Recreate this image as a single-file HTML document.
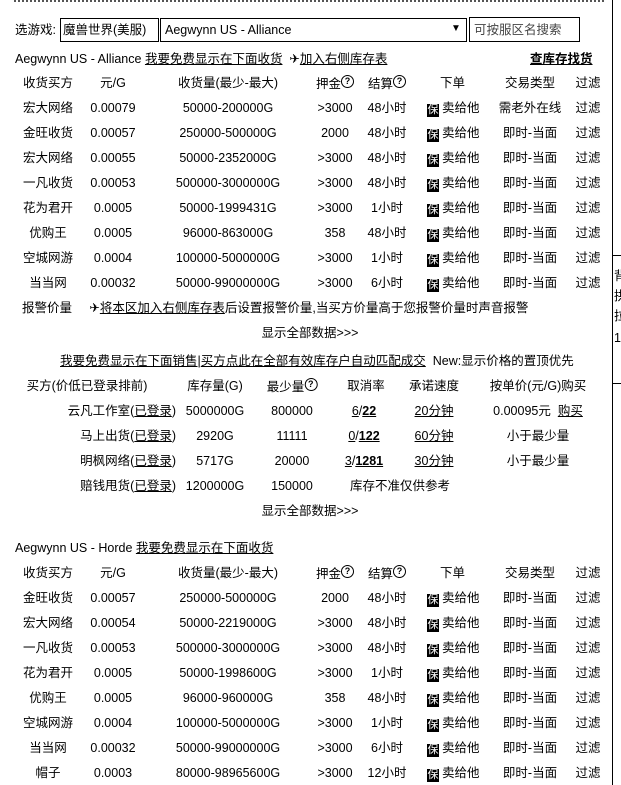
<!DOCTYPE html>
<html><head><meta charset="utf-8"><style>
body{margin:0;width:621px;height:785px;background:#fff;position:relative;overflow:hidden;font-family:"Liberation Sans","Noto Sans CJK SC",sans-serif;font-size:12.5px;color:#000}
.a{position:absolute;white-space:nowrap;line-height:16px}
.c{position:absolute;white-space:nowrap;line-height:16px;transform:translateX(-50%)}
u{text-decoration:underline}
.bao{display:inline-block;width:12px;height:13px;background:#000;color:#fff;font-size:11px;line-height:13px;text-align:center;vertical-align:-1px;margin-right:3px}
.q{display:inline-block;width:11px;height:11px;border:1px solid #000;border-radius:50%;font-size:9px;line-height:11px;text-align:center;vertical-align:4px;font-weight:bold}
.box{position:absolute;border:1px solid #000}
</style></head><body>
<div class="a" style="left:14px;top:0;width:590px;height:3px;border-top:2px dotted #555"></div>
<div style="position:absolute;left:612px;top:0;width:1px;height:785px;background:#000"></div>
<div class="box" style="left:612px;top:255px;width:12px;height:127px"></div>
<div class="a" style="left:614px;top:268px">背</div>
<div class="a" style="left:614px;top:288px">拱</div>
<div class="a" style="left:614px;top:308px">拉</div>
<div class="a" style="left:614px;top:330px">1</div>

<div class="a" style="left:15px;top:22px">选游戏:</div>
<div class="box" style="left:60px;top:18px;width:97px;height:22px"></div>
<div class="a" style="left:63px;top:22px">魔兽世界(美服)</div>
<div class="box" style="left:160px;top:18px;width:305px;height:22px"></div>
<div class="a" style="left:165px;top:22px">Aegwynn US - Alliance</div>
<div class="a" style="left:451px;top:21px;font-size:10px">▼</div>
<div class="box" style="left:469px;top:17px;width:109px;height:23px"></div>
<div class="a" style="left:474px;top:22px;color:#444">可按服区名搜索</div>

<div class="a" style="left:15px;top:51px">Aegwynn US - Alliance <u>我要免费显示在下面收货</u> &nbsp;✈<u>加入右侧库存表</u></div>
<div class="a" style="left:530px;top:51px"><u><b>查库存找货</b></u></div>

<div id="t1"></div>
<div class="a" style="left:22px;top:300px">报警价量 &nbsp;&nbsp;&nbsp;&nbsp;✈<u>将本区加入右侧库存表</u>后设置报警价量,当买方价量高于您报警价量时声音报警</div>
<div class="c" style="left:310px;top:325px">显示全部数据&gt;&gt;&gt;</div>
<div class="a" style="left:60px;top:353px"><u>我要免费显示在下面销售</u>|<u>买方点此在全部有效库存户自动匹配成交</u> &nbsp;New:显示价格的置顶优先</div>

<div class="c" style="left:87px;top:378px">买方(价低已登录排前)</div>
<div class="c" style="left:215px;top:378px">库存量(G)</div>
<div class="c" style="left:292px;top:378px">最少量<span class="q">?</span></div>
<div class="c" style="left:366px;top:378px">取消率</div>
<div class="c" style="left:434px;top:378px">承诺速度</div>
<div class="c" style="left:538px;top:378px">按单价(元/G)购买</div>

<div class="a" style="right:445px;top:403px">云凡工作室(<u>已登录</u>)</div>
<div class="c" style="left:215px;top:403px">5000000G</div><div class="c" style="left:292px;top:403px">800000</div>
<div class="c" style="left:364px;top:403px"><u>6</u>/<u><b>22</b></u></div><div class="c" style="left:434px;top:403px"><u>20分钟</u></div>
<div class="c" style="left:538px;top:403px">0.00095元 &nbsp;<u>购买</u></div>

<div class="a" style="right:445px;top:428px">马上出货(<u>已登录</u>)</div>
<div class="c" style="left:215px;top:428px">2920G</div><div class="c" style="left:292px;top:428px">11111</div>
<div class="c" style="left:364px;top:428px"><u>0</u>/<u><b>122</b></u></div><div class="c" style="left:434px;top:428px"><u>60分钟</u></div>
<div class="c" style="left:538px;top:428px">小于最少量</div>

<div class="a" style="right:445px;top:453px">明枫网络(<u>已登录</u>)</div>
<div class="c" style="left:215px;top:453px">5717G</div><div class="c" style="left:292px;top:453px">20000</div>
<div class="c" style="left:364px;top:453px"><u>3</u>/<u><b>1281</b></u></div><div class="c" style="left:434px;top:453px"><u>30分钟</u></div>
<div class="c" style="left:538px;top:453px">小于最少量</div>

<div class="a" style="right:445px;top:478px">赔钱甩货(<u>已登录</u>)</div>
<div class="c" style="left:215px;top:478px">1200000G</div><div class="c" style="left:292px;top:478px">150000</div>
<div class="c" style="left:400px;top:478px">库存不准仅供参考</div>
<div class="c" style="left:310px;top:503px">显示全部数据&gt;&gt;&gt;</div>

<div class="a" style="left:15px;top:540px">Aegwynn US - Horde <u>我要免费显示在下面收货</u></div>
<div id="t2"></div>

<script>
function tbl(id,top,rows){
 var h='';var cols=[48,113,228,335,387,0,530,588];
 function row(y,c,hd){
  for(var i=0;i<8;i++){
   if(i==5){h+='<div class="a" style="left:'+(hd?440:427)+'px;top:'+y+'px">'+(hd?'下单':'<span class="bao">保</span>卖给他')+'</div>';continue;}
   h+='<div class="c" style="left:'+cols[i]+'px;top:'+y+'px">'+c[i]+'</div>';
  }
 }
 row(top,['收货买方','元/G','收货量(最少-最大)','押金<span class="q">?</span>','结算<span class="q">?</span>','','交易类型','过滤'],1);
 rows.forEach(function(r,i){row(top+25*(i+1),r.concat? r:[],0)});
 document.getElementById(id).innerHTML=h;
}
function R(a,b,c,d,e,f){return [a,b,c,d,e,'',f||'即时-当面','过滤']}
tbl('t1',75,[
R('宏大网络','0.00079','50000-200000G','&gt;3000','48小时','需老外在线'),
R('金旺收货','0.00057','250000-500000G','2000','48小时'),
R('宏大网络','0.00055','50000-2352000G','&gt;3000','48小时'),
R('一凡收货','0.00053','500000-3000000G','&gt;3000','48小时'),
R('花为君开','0.0005','50000-1999431G','&gt;3000','1小时'),
R('优购王','0.0005','96000-863000G','358','48小时'),
R('空城网游','0.0004','100000-5000000G','&gt;3000','1小时'),
R('当当网','0.00032','50000-99000000G','&gt;3000','6小时')]);
tbl('t2',565,[
R('金旺收货','0.00057','250000-500000G','2000','48小时'),
R('宏大网络','0.00054','50000-2219000G','&gt;3000','48小时'),
R('一凡收货','0.00053','500000-3000000G','&gt;3000','48小时'),
R('花为君开','0.0005','50000-1998600G','&gt;3000','1小时'),
R('优购王','0.0005','96000-960000G','358','48小时'),
R('空城网游','0.0004','100000-5000000G','&gt;3000','1小时'),
R('当当网','0.00032','50000-99000000G','&gt;3000','6小时'),
R('帽子','0.0003','80000-98965600G','&gt;3000','12小时')]);
</script>
</body></html>
